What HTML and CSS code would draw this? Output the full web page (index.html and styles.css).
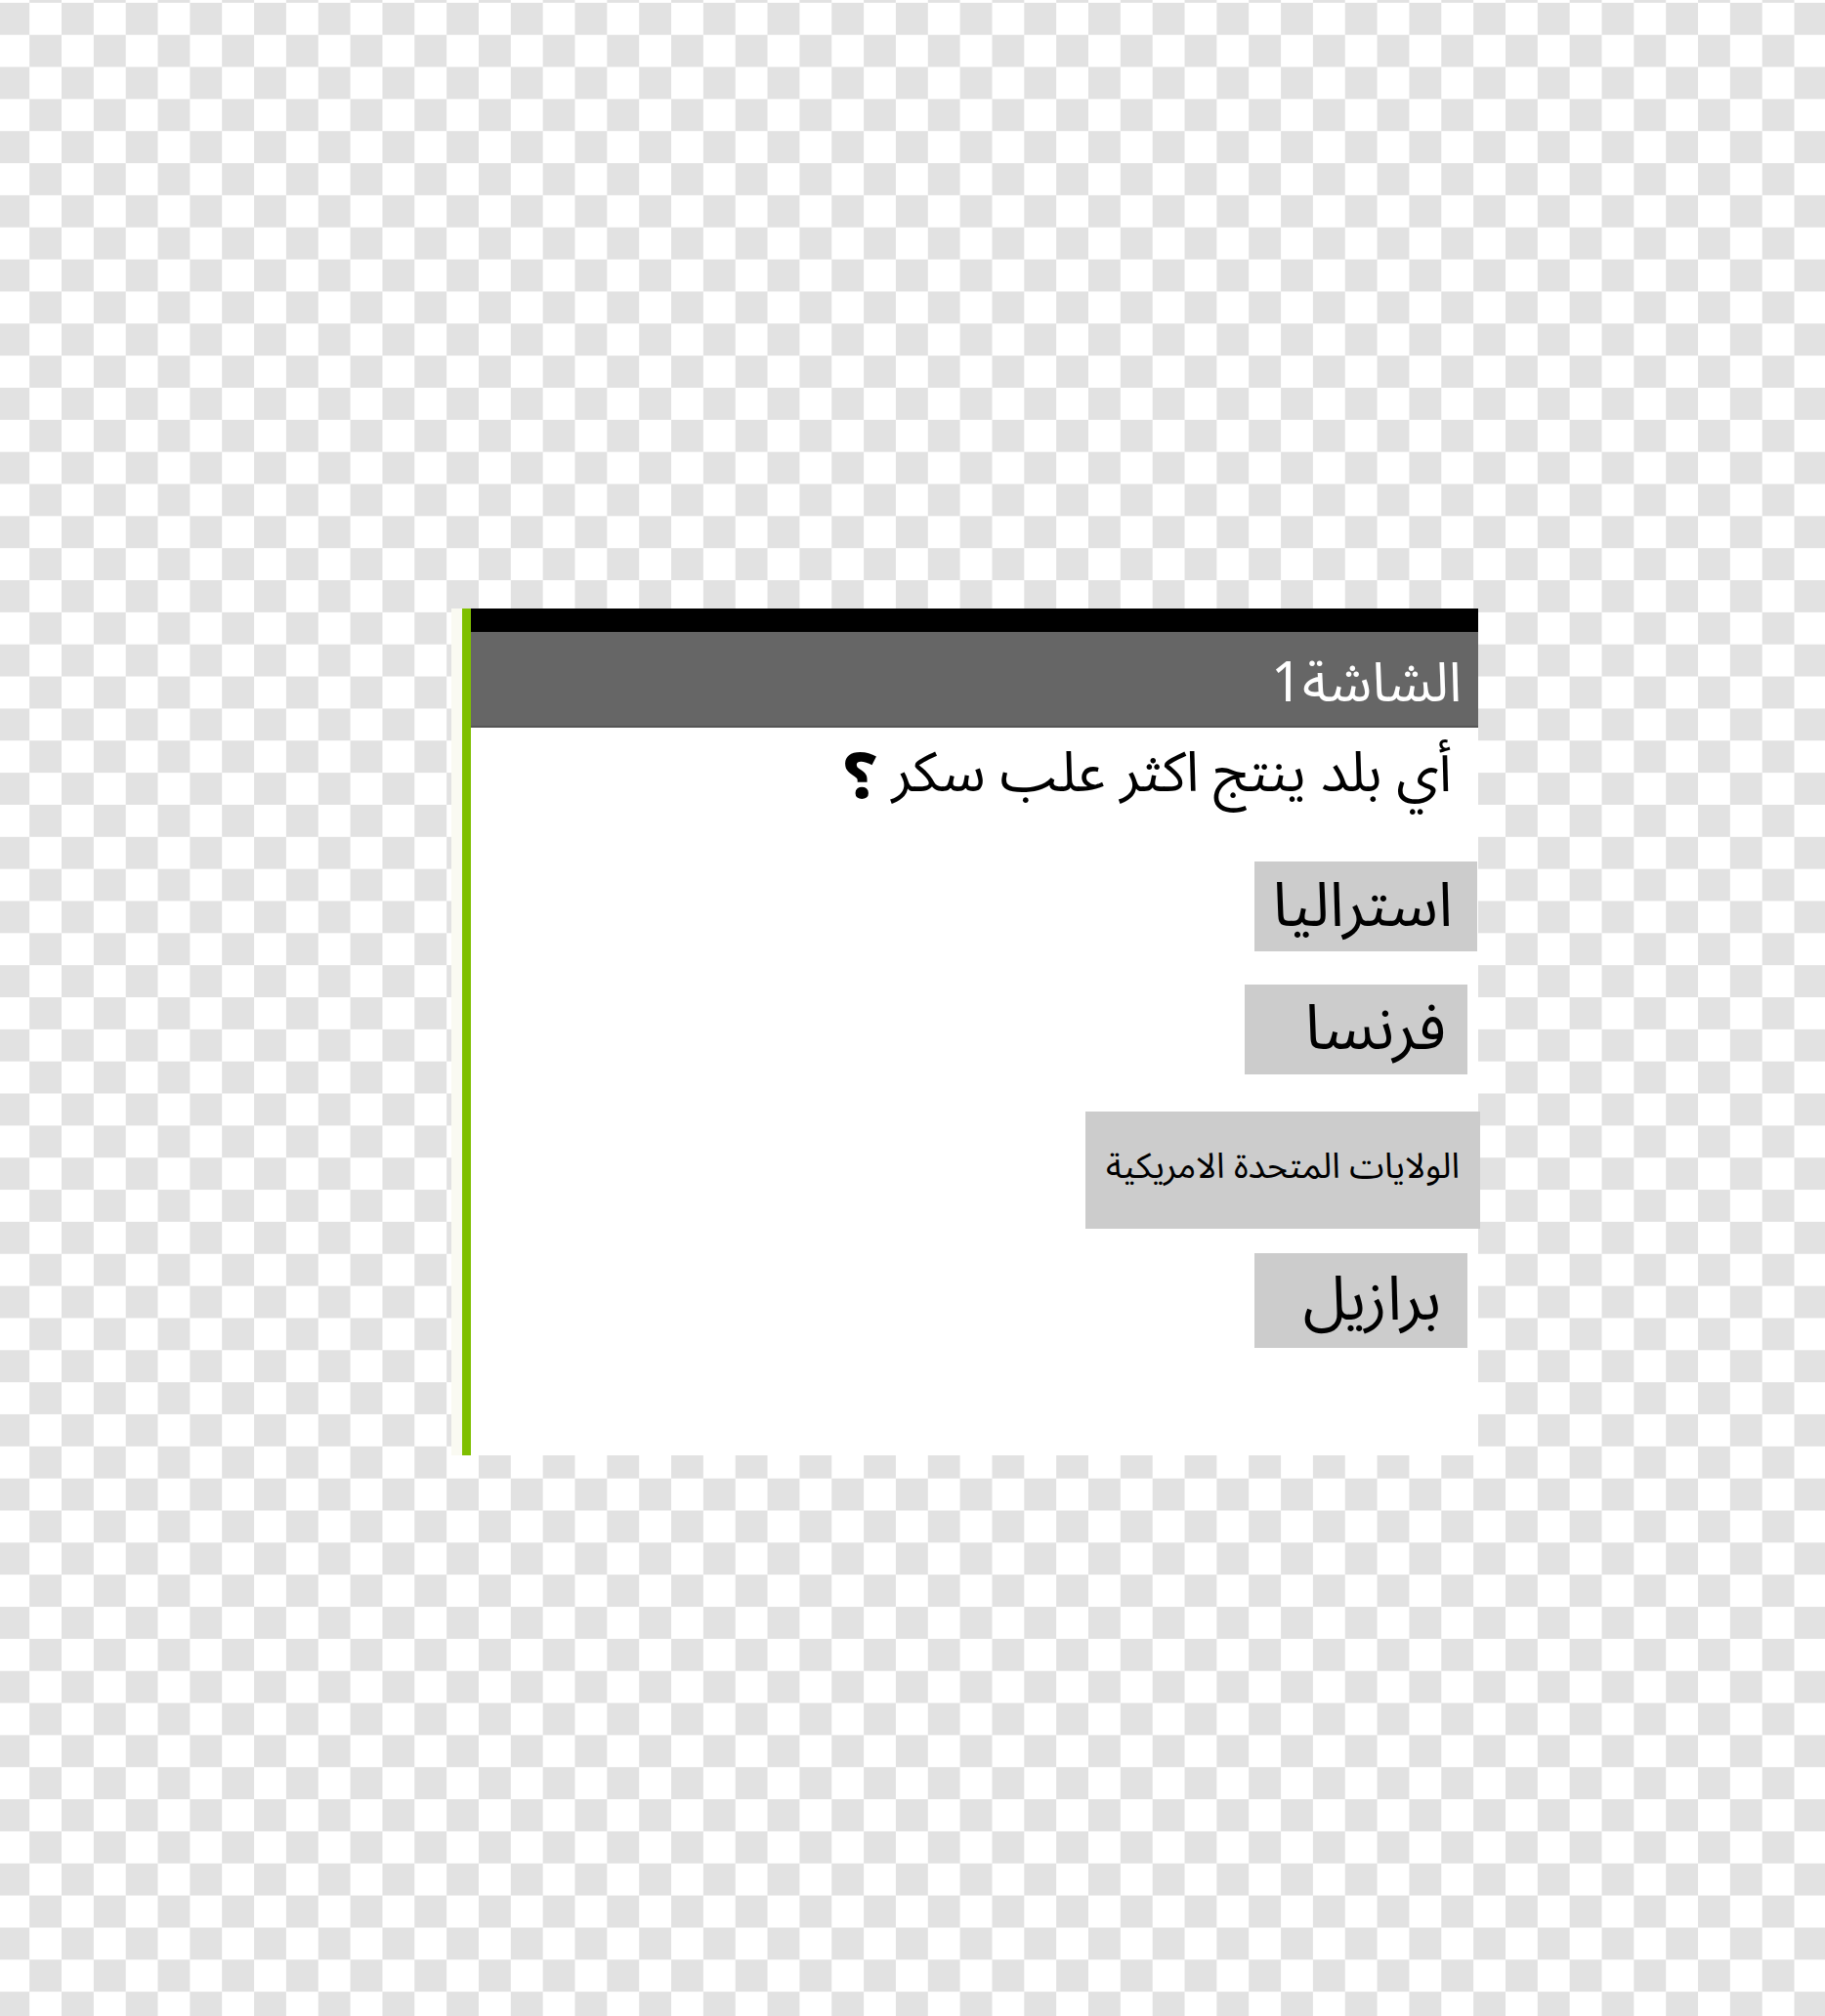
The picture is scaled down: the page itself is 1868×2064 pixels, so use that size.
FILE: index.html
```html
<!DOCTYPE html>
<html lang="ar">
<head>
<meta charset="utf-8">
<title>الشاشة1</title>
<link rel="stylesheet" href="styles.css">
</head>
<body>
<div class="phone">
  <div class="edge"></div>
  <div class="accent"></div>
  <div class="screen">
    <div class="statusbar"></div>
    <div class="titlebar" dir="rtl"><span class="title">الشاشة1</span></div>
    <div class="content" dir="rtl">
      <p class="question">أي بلد ينتج اكثر علب سكر <span class="qmark">؟</span></p>
      <div class="options">
        <button class="opt opt-1">استراليا</button>
        <button class="opt opt-2">فرنسا</button>
        <button class="opt opt-3">الولايات المتحدة الامريكية</button>
        <button class="opt opt-4">برازيل</button>
      </div>
    </div>
  </div>
</div>
</body>
</html>
```

FILE: styles.css
```css
html, body {
  margin: 0;
  padding: 0;
}

body {
  background-color: #ffffff;
  background-image: conic-gradient(transparent 25%, #e2e2e2 0 50%, transparent 0 75%, #e2e2e2 0);
  background-size: 65.7px 65.7px;
  background-position: -2.7px 2.85px;
  min-height: 2064px;
  font-family: "Noto Sans", "Noto Sans Arabic", "DejaVu Sans", sans-serif;
}

.phone {
  display: flex;
  margin: 0 0 0 462px;
  padding-top: 623px;
  width: 1052px;
}

.edge {
  width: 11px;
  height: 867px;
  background: #fafaf2;
}

.accent {
  width: 9px;
  height: 867px;
  background: #7fbf00;
}

.screen {
  width: 1031px;
  display: flex;
  flex-direction: column;
}

.statusbar {
  height: 24px;
  background: #000;
}

.titlebar {
  height: 96px;
  background: #666666;
  border-bottom: 2px solid #555555;
  display: flex;
  align-items: center;
  padding-right: 17px;
}

.title {
  color: #ffffff;
  font-size: 56px;
  line-height: 1;
  padding-top: 2px;
}

.content {
  background: #ffffff;
  height: 745px;
  display: flex;
  flex-direction: column;
}

.question {
  margin: 0 27px 0 0;
  font-size: 57px;
  color: #000;
  line-height: 87px;
}

.qmark {
  font-weight: 700;
  font-size: 1.15em;
  line-height: 1;
  vertical-align: -8px;
}

.options {
  display: flex;
  flex-direction: column;
  align-items: flex-start;
  margin-top: 50px;
}

.opt {
  box-sizing: border-box;
  border: 0;
  background: #cccccc;
  color: #000;
  font-family: inherit;
  text-align: right;
  padding: 0 0 10px 0;
  line-height: 1;
  display: flex;
  align-items: center;
  justify-content: flex-start;
}

.opt-1 {
  width: 228px;
  height: 92px;
  margin-right: 1px;
  padding-right: 25px;
  font-size: 63px;
}

.opt-2 {
  width: 228px;
  height: 92px;
  margin-top: 34px;
  margin-right: 11px;
  padding-right: 22px;
  font-size: 65px;
}

.opt-3 {
  width: 404px;
  height: 120px;
  margin-top: 38px;
  margin-right: -2px;
  padding-right: 21px;
  font-size: 36px;
}

.opt-4 {
  width: 218px;
  height: 97px;
  margin-top: 25px;
  margin-right: 11px;
  padding-right: 27px;
  font-size: 63px;
}
```
